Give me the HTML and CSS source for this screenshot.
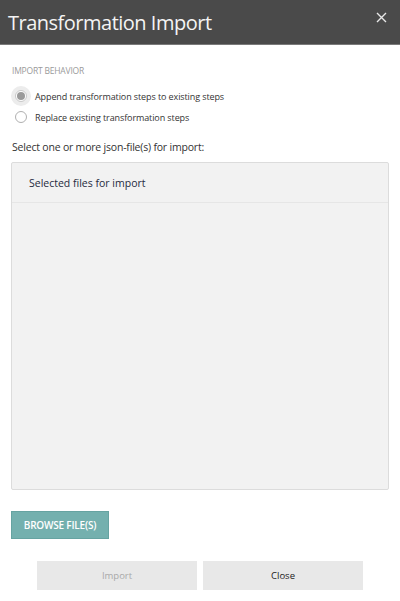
FILE: index.html
```html
<!DOCTYPE html>
<html>
<head>
<meta charset="utf-8">
<link rel="stylesheet" href="styles.css">
</head>
<body>
<div class="dialog">
  <header class="header">
    <h1 class="title">Transformation Import</h1>
    <button class="close-x" aria-label="Close">
      <svg width="11" height="11" viewBox="0 0 11 11"><path d="M1 1 L10 10 M10 1 L1 10" stroke="#e8e8e8" stroke-width="1.4" fill="none"/></svg>
    </button>
  </header>
  <main class="content">
    <div class="section-label">IMPORT BEHAVIOR</div>
    <div class="radios">
      <label class="radio-row">
        <span class="radio checked"><span class="dot"></span></span>
        <span class="radio-text">Append transformation steps to existing steps</span>
      </label>
      <label class="radio-row">
        <span class="radio"></span>
        <span class="radio-text">Replace existing transformation steps</span>
      </label>
    </div>
    <div class="select-label">Select one or more json-file(s) for import:</div>
    <div class="file-box">
      <div class="file-box-head">Selected files for import</div>
    </div>
    <button class="browse">BROWSE FILE(S)</button>
    <div class="actions">
      <button class="btn disabled">Import</button>
      <button class="btn">Close</button>
    </div>
  </main>
</div>
</body>
</html>
```
FILE: styles.css
```css
html, body {
  margin: 0;
  padding: 0;
  background: #ffffff;
}
body {
  font-family: "Open Sans", "Noto Sans", "Liberation Sans", sans-serif;
  color: #333333;
}
.dialog {
  width: 400px;
  height: 601px;
}
.header {
  height: 45px;
  background: #4a4a4a;
  border-bottom: 1px solid #7a7a7a;
  box-sizing: border-box;
  display: flex;
  align-items: center;
  justify-content: space-between;
  padding: 0 13px 0 8px;
}
.title {
  margin: 0;
  font-weight: 400;
  font-size: 20px;
  color: #f4f4f4;
  letter-spacing: -0.5px;
  line-height: 1;
  padding-top: 1px;
}
.close-x {
  background: none;
  border: 0;
  padding: 0;
  margin-top: -10px;
  display: flex;
}
.content {
  padding: 0 11px;
}
.section-label {
  margin-top: 20px;
  font-size: 8.5px;
  color: #9a9a9a;
  letter-spacing: -0.2px;
  line-height: 12px;
  padding-left: 1px;
}
.radios {
  margin-top: 12px;
  display: flex;
  flex-direction: column;
  gap: 7px;
}
.radio-row {
  display: flex;
  align-items: center;
  height: 14px;
  padding-left: 4px;
}
.radio {
  width: 12px;
  height: 12px;
  border: 1px solid #b0b0b0;
  border-radius: 50%;
  background: #fff;
  display: flex;
  align-items: center;
  justify-content: center;
  box-sizing: border-box;
  margin-right: 8px;
  flex: none;
}
.radio.checked {
  border-color: #c8c8c8;
  box-shadow: 0 0 0 4px #ececec;
  background: #ffffff;
}
.dot {
  width: 8px;
  height: 8px;
  border-radius: 50%;
  background: #9a9a9a;
}
.radio-text {
  font-size: 9px;
  color: #333;
  letter-spacing: -0.1px;
}
.select-label {
  margin-top: 16px;
  font-size: 10.5px;
  color: #333;
  padding-left: 1px;
  letter-spacing: -0.2px;
  line-height: 14px;
}
.file-box {
  margin-top: 8px;
  height: 328px;
  background: #f2f2f2;
  border: 1px solid #dcdcdc;
  border-radius: 2px;
  box-sizing: border-box;
}
.file-box-head {
  height: 40px;
  border-bottom: 1px solid #e6e6e6;
  box-sizing: border-box;
  padding-left: 17px;
  display: flex;
  align-items: center;
  font-size: 10.5px;
  color: #252a40;
}
.browse {
  margin-top: 21px;
  width: 98px;
  height: 28px;
  background: #74b0ae;
  border: 1px solid #66a3a1;
  color: #ffffff;
  font-family: inherit;
  font-size: 10px;
  font-weight: 600;
  padding: 0;
  letter-spacing: -0.2px;
  display: block;
}
.actions {
  margin-top: 22px;
  display: flex;
  gap: 6px;
  padding-left: 26px;
}
.btn {
  width: 160px;
  height: 29px;
  background: #e8e8e8;
  border: 0;
  font-family: inherit;
  font-size: 9.5px;
  color: #222;
  padding: 0;
}
.btn.disabled {
  color: #a8a8a8;
}
```
